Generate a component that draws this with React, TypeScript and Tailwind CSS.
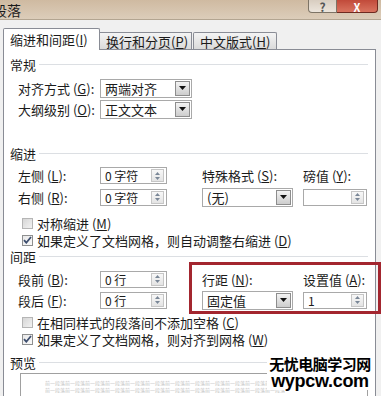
import type { ReactNode } from 'react'

const TEXT = 'text-[13px] leading-[15px] text-[#1b1b1b]'

function K({ children }: { children: ReactNode }) {
  return <span className="underline underline-offset-1">{children}</span>
}

function Header({ title }: { title: string }) {
  return (
    <div className="flex h-[15px] items-center gap-[3px]">
      <span className={TEXT}>{title}</span>
      <span className="h-px flex-1 bg-[#dcdfe3]" />
    </div>
  )
}

function DropButton() {
  return (
    <span className="flex h-[15px] w-[15px] items-center justify-center border border-[#8d8d8d] bg-gradient-to-b from-[#f3f3f3] to-[#cdcdcd]">
      <svg width="7" height="4" viewBox="0 0 7 4" aria-hidden>
        <path d="M0 0h7L3.5 4z" fill="#111" />
      </svg>
    </span>
  )
}

function Select({ value, className }: { value: string; className: string }) {
  return (
    <div
      className={`flex h-[19px] items-center border border-[#a9a9a9] bg-white pl-[4px] pr-[1px] ${className}`}
    >
      <span className={`flex-1 ${TEXT}`}>{value}</span>
      <DropButton />
    </div>
  )
}

function Spin({ value, className }: { value: string; className: string }) {
  return (
    <div
      className={`flex h-[17px] items-center border border-[#a9a9a9] bg-white pl-[4px] pr-[2px] ${className}`}
    >
      <span className="flex-1 text-[12px] leading-[15px] text-[#1b1b1b]">{value}</span>
      <span className="flex h-[13px] w-[13px] flex-col items-center justify-center gap-[2px] border border-[#c6c6c6] bg-gradient-to-b from-[#f8f8f8] to-[#e4e4e4]">
        <svg width="5" height="3" viewBox="0 0 5 3" aria-hidden>
          <path d="M0 3h5L2.5 0z" fill="#7a8797" />
        </svg>
        <svg width="5" height="3" viewBox="0 0 5 3" aria-hidden>
          <path d="M0 0h5L2.5 3z" fill="#7a8797" />
        </svg>
      </span>
    </div>
  )
}

function Check({ checked, label }: { checked: boolean; label: ReactNode }) {
  return (
    <div className="ml-[12px] flex h-[14px] items-center gap-[4px]">
      {checked ? (
        <span className="flex h-[11px] w-[11px] items-center justify-center border border-[#8e8f8f] bg-gradient-to-br from-[#e8e8e8] to-[#fafafa]">
          <svg width="9" height="8" viewBox="0 0 9 8" aria-hidden>
            <path d="M1 4.2l2.3 2.5L8 1" stroke="#3d4e6e" strokeWidth="1.8" fill="none" />
          </svg>
        </span>
      ) : (
        <span className="h-[11px] w-[11px] border border-[#b5b5b5] bg-gradient-to-br from-[#d6d6d6] to-[#f2f2f2]" />
      )}
      <span className={TEXT}>{label}</span>
    </div>
  )
}

export default function App() {
  const preview = '前一段落'.repeat(15)

  return (
    <div className="relative h-[396px] w-[381px] overflow-hidden bg-[#f0f0f0] font-['Noto_Sans_CJK_SC','Liberation_Sans',sans-serif]">
      {/* 标题栏 */}
      <div className="flex h-[20px] items-start justify-between border-b border-[#b3a591] bg-gradient-to-b from-[#cfbaa1] to-[#dccdba]">
        <span className="ml-[-7px] mt-[2px] text-[14px] leading-[16px] text-[#1b1b1b]">段落</span>
        <div className="mr-[3px] flex">
          <span className="flex h-[13px] w-[29px] items-end justify-center rounded-bl-[4px] border border-t-0 border-[#7d7466] bg-gradient-to-b from-[#d8cdc0] to-[#ece5dc] text-[12px] font-bold leading-[11px] text-[#555]">
            ?
          </span>
          <span className="flex h-[13px] w-[41px] items-end justify-center rounded-br-[4px] border border-l-0 border-t-0 border-[#6e2a20] bg-gradient-to-b from-[#c14a3a] to-[#d9735f] text-[11px] font-bold leading-[10px] text-white">
            X
          </span>
        </div>
      </div>

      {/* 标签页 */}
      <div className="px-[3px] pt-[8px]">
        <div className="relative z-10 flex items-end">
          <div className="mb-[-1px] flex h-[22px] w-[97px] items-center rounded-t-[2px] border border-b-0 border-[#898c95] bg-white pl-[6px]">
            <span className={TEXT}>
              缩进和间距(<K>I</K>)
            </span>
          </div>
          <div className="flex h-[17px] w-[92px] items-center border border-b-0 border-l-0 border-[#898c95] bg-gradient-to-b from-[#f4f4f4] to-[#dadada] pl-[6px]">
            <span className={TEXT}>
              换行和分页(<K>P</K>)
            </span>
          </div>
          <div className="ml-[1px] flex h-[17px] w-[84px] items-center rounded-t-[2px] border border-b-0 border-[#898c95] bg-gradient-to-b from-[#f4f4f4] to-[#dadada] pl-[6px]">
            <span className={TEXT}>
              中文版式(<K>H</K>)
            </span>
          </div>
        </div>

        {/* 面板 */}
        <div className="h-[360px] w-[373px] border border-[#898c95] bg-white pl-[6px] pr-[7px] pt-[7px]">
          <Header title="常规" />
          <div className="ml-[8px] mt-[6px] flex h-[20px] items-center">
            <span className={`w-[82px] ${TEXT}`}>
              对齐方式 (<K>G</K>):
            </span>
            <Select value="两端对齐" className="w-[92px]" />
          </div>
          <div className="ml-[8px] mt-[1px] flex h-[20px] items-center">
            <span className={`w-[82px] ${TEXT}`}>
              大纲级别 (<K>O</K>):
            </span>
            <Select value="正文文本" className="w-[92px]" />
          </div>

          <div className="mt-[27px]">
            <Header title="缩进" />
          </div>
          <div className="ml-[8px] mt-[6px] flex h-[17px] items-center">
            <span className={`w-[82px] ${TEXT}`}>
              左侧 (<K>L</K>):
            </span>
            <Spin value="0 字符" className="w-[67px]" />
            <span className={`ml-[35px] w-[101px] ${TEXT}`}>
              特殊格式 (<K>S</K>):
            </span>
            <span className={TEXT}>
              磅值 (<K>Y</K>):
            </span>
          </div>
          <div className="ml-[8px] mt-[4px] flex h-[18px] items-center">
            <span className={`w-[82px] ${TEXT}`}>
              右侧 (<K>R</K>):
            </span>
            <Spin value="0 字符" className="w-[67px]" />
            <Select value="(无)" className="ml-[35px] w-[91px]" />
            <Spin value="" className="ml-[10px] w-[64px]" />
          </div>
          <div className="mt-[10px]">
            <Check checked={false} label={<>对称缩进 (<K>M</K>)</>} />
          </div>
          <div className="mt-[3px]">
            <Check checked label={<>如果定义了文档网格，则自动调整右缩进 (<K>D</K>)</>} />
          </div>

          <div className="mt-[2px]">
            <Header title="间距" />
          </div>
          <div className="ml-[8px] mt-[6px] flex h-[18px] items-center">
            <span className={`w-[82px] ${TEXT}`}>
              段前 (<K>B</K>):
            </span>
            <Spin value="0 行" className="w-[67px]" />
            <span className={`ml-[35px] w-[101px] ${TEXT}`}>
              行距 (<K>N</K>):
            </span>
            <span className={TEXT}>
              设置值 (<K>A</K>):
            </span>
          </div>
          <div className="ml-[8px] mt-[3px] flex h-[18px] items-center">
            <span className={`w-[82px] ${TEXT}`}>
              段后 (<K>F</K>):
            </span>
            <Spin value="0 行" className="w-[67px]" />
            <Select value="固定值" className="ml-[35px] w-[91px]" />
            <Spin value="1" className="ml-[10px] w-[64px]" />
          </div>
          <div className="mt-[6px]">
            <Check checked={false} label={<>在相同样式的段落间不添加空格 (<K>C</K>)</>} />
          </div>
          <div className="mt-[3px]">
            <Check checked label={<>如果定义了文档网格，则对齐到网格 (<K>W</K>)</>} />
          </div>

          <div className="mt-[9px]">
            <Header title="预览" />
          </div>
          <div className="ml-[10px] mt-[3px] h-[40px] border border-[#a0a0a0] bg-white pl-[24px] pt-[5px]">
            <p className="w-[240px] overflow-hidden whitespace-nowrap text-[5px] leading-[7px] text-[#c4c4c4]">
              {preview}
            </p>
            <p className="w-[240px] overflow-hidden whitespace-nowrap text-[5px] leading-[7px] text-[#c4c4c4]">
              {preview}
            </p>
          </div>
        </div>
      </div>

      {/* 红框标注 */}
      <div className="absolute left-[189px] top-[262px] h-[52px] w-[192px] border-[3px] border-[#a3262f]" />

      {/* 水印 */}
      <div className="absolute left-[267px] top-[355px] flex w-[106px] flex-col items-center bg-white pb-[1px]">
        <span className="text-[15px] font-bold leading-[18px] tracking-[-0.5px] text-black">
          无忧电脑学习网
        </span>
        <span className="font-['Liberation_Sans',sans-serif] text-[18px] font-bold leading-[16px] tracking-[-0.3px] text-black">
          wypcw.com
        </span>
      </div>
    </div>
  )
}
